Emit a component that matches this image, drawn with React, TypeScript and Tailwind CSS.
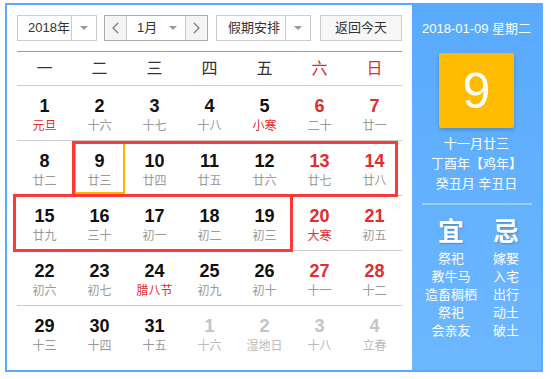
import React from "react";

type Cell = { d: number; l: string; red?: boolean; lred?: boolean; other?: boolean; sel?: boolean };

const rows: Cell[][] = [
  [
    { d: 1, l: "元旦", lred: true },
    { d: 2, l: "十六" },
    { d: 3, l: "十七" },
    { d: 4, l: "十八" },
    { d: 5, l: "小寒", lred: true },
    { d: 6, l: "二十", red: true },
    { d: 7, l: "廿一", red: true },
  ],
  [
    { d: 8, l: "廿二" },
    { d: 9, l: "廿三", sel: true },
    { d: 10, l: "廿四" },
    { d: 11, l: "廿五" },
    { d: 12, l: "廿六" },
    { d: 13, l: "廿七", red: true },
    { d: 14, l: "廿八", red: true },
  ],
  [
    { d: 15, l: "廿九" },
    { d: 16, l: "三十" },
    { d: 17, l: "初一" },
    { d: 18, l: "初二" },
    { d: 19, l: "初三" },
    { d: 20, l: "大寒", red: true, lred: true },
    { d: 21, l: "初五", red: true },
  ],
  [
    { d: 22, l: "初六" },
    { d: 23, l: "初七" },
    { d: 24, l: "腊八节", lred: true },
    { d: 25, l: "初九" },
    { d: 26, l: "初十" },
    { d: 27, l: "十一", red: true },
    { d: 28, l: "十二", red: true },
  ],
  [
    { d: 29, l: "十三" },
    { d: 30, l: "十四" },
    { d: 31, l: "十五" },
    { d: 1, l: "十六", other: true },
    { d: 2, l: "湿地日", other: true },
    { d: 3, l: "十八", other: true },
    { d: 4, l: "立春", other: true },
  ],
];

const weekdays = ["一", "二", "三", "四", "五", "六", "日"];

function Arrow() {
  return (
    <span className="block w-0 h-0 border-l-[4px] border-r-[4px] border-t-[4px] border-l-transparent border-r-transparent border-t-[#999]" />
  );
}

function Chevron({ dir }: { dir: "l" | "r" }) {
  return (
    <svg width="7" height="12" viewBox="0 0 7 12">
      <polyline
        points={dir === "l" ? "6,1 1,6 6,11" : "1,1 6,6 1,11"}
        fill="none"
        stroke="#777"
        strokeWidth="1.2"
      />
    </svg>
  );
}

const yi = ["祭祀", "教牛马", "造畜稠栖", "祭祀", "会亲友"];
const ji = ["嫁娶", "入宅", "出行", "动土", "破土"];

export default function App() {
  return (
    <div
      className="ml-[5px] mt-[3px] w-[538px] h-[369px] border-2 border-[#5aabfd] flex bg-white"
      style={{ fontFamily: '"Liberation Sans", Arial, "Noto Sans CJK SC", sans-serif' }}
    >
      <div className="relative w-[405px] px-[10px] pt-[10px]">
        {/* toolbar */}
        <div className="flex h-[26px] text-[13px] text-[#333]">
          <div className="w-[80px] flex border border-[#ccc] bg-white">
            <div className="flex-1 flex items-center pl-[10px]">2018年</div>
            <div className="w-[25px] border-l border-[#ccc] flex items-center justify-center">
              <Arrow />
            </div>
          </div>
          <div className="ml-[7px] w-[104px] flex border border-[#aaa]">
            <div className="w-[22px] bg-[#f4f4f4] flex items-center justify-center border-r border-[#ccc]">
              <Chevron dir="l" />
            </div>
            <div className="flex-1 flex items-center bg-white">
              <span className="flex-1 pl-[10px]">1月</span>
              <span className="pr-[8px]">
                <Arrow />
              </span>
            </div>
            <div className="w-[22px] bg-[#f4f4f4] flex items-center justify-center border-l border-[#ccc]">
              <Chevron dir="r" />
            </div>
          </div>
          <div className="ml-[8px] w-[95px] flex border border-[#ccc] bg-white">
            <div className="flex-1 flex items-center pl-[11px]">假期安排</div>
            <div className="w-[25px] border-l border-[#ccc] flex items-center justify-center">
              <Arrow />
            </div>
          </div>
          <div className="ml-[9px] w-[82px] flex items-center justify-center border border-[#ccc] bg-[#f7f7f7]">
            返回今天
          </div>
        </div>
        <div className="mt-[10px] h-px bg-[#5aabfd]" />
        {/* header */}
        <div className="grid grid-cols-7 h-[34px] border-b border-[#ccc] text-[16px]">
          {weekdays.map((w, i) => (
            <div
              key={w}
              className={`flex items-center justify-center ${i >= 5 ? "text-[#e02d2d]" : "text-[#333]"}`}
            >
              {w}
            </div>
          ))}
        </div>
        {rows.map((r, ri) => (
          <div
            key={ri}
            className={`grid grid-cols-7 h-[55px] ${ri < 4 ? "border-b border-[#ccc]" : ""}`}
          >
            {r.map((c, ci) => (
              <div key={ci} className="relative flex flex-col items-center pt-[10px]">
                {c.sel && (
                  <div className="absolute top-0 left-[2px] right-[2px] bottom-[1px] border-2 border-[#ffb400]" />
                )}
                <div
                  className={`text-[18px] leading-[20px] font-bold ${
                    c.other ? "text-[#c4c4c4]" : c.red ? "text-[#e02d2d]" : "text-[#111]"
                  }`}
                >
                  {c.d}
                </div>
                <div
                  className={`text-[12px] leading-[20px] ${
                    c.other ? "text-[#bbb]" : c.lred ? "text-[#e02d2d]" : "text-[#999]"
                  }`}
                >
                  {c.l}
                </div>
              </div>
            ))}
          </div>
        ))}
        {/* annotation boxes */}
        <div className="absolute left-[65px] top-[136px] w-[326px] h-[56px] border-[3px] border-[#ff3838]" />
        <div className="absolute left-[6px] top-[189px] w-[280px] h-[58px] border-[3px] border-[#ff3838]" />
      </div>
      {/* right panel */}
      <div className="flex-1 bg-gradient-to-b from-[#58aafd] to-[#6db7ff] text-white flex flex-col items-center">
        <div className="mt-[16px] text-[13px] leading-[16px]">2018-01-09 星期二</div>
        <div className="mt-[16px] w-[75px] h-[75px] rounded-[2px] bg-[#ffbb00] shadow-[0_2px_4px_rgba(0,0,0,0.2)] flex items-center justify-center text-[50px] leading-none">
          9
        </div>
        <div className="mt-[6px] text-[13px] leading-[20px] text-center">
          <div>十一月廿三</div>
          <div>丁酉年【鸡年】</div>
          <div>癸丑月 辛丑日</div>
        </div>
        <div className="mt-[9px] w-[110px] h-[2px] bg-[#9ccefd]" />
        <div className="mt-[12px] grid grid-cols-[55px_55px] ml-[4px]">
          <div className="text-center text-[26px] leading-[30px] font-bold [text-shadow:1px_1px_2px_rgba(0,0,0,0.25)]">宜</div>
          <div className="text-center text-[26px] leading-[30px] font-bold [text-shadow:1px_1px_2px_rgba(0,0,0,0.25)]">忌</div>
          <div className="mt-[3px] text-[13px] leading-[18px] text-center">
            {yi.map((t, i) => (
              <div key={i}>{t}</div>
            ))}
          </div>
          <div className="mt-[3px] text-[13px] leading-[18px] text-center">
            {ji.map((t, i) => (
              <div key={i}>{t}</div>
            ))}
          </div>
        </div>
      </div>
    </div>
  );
}
